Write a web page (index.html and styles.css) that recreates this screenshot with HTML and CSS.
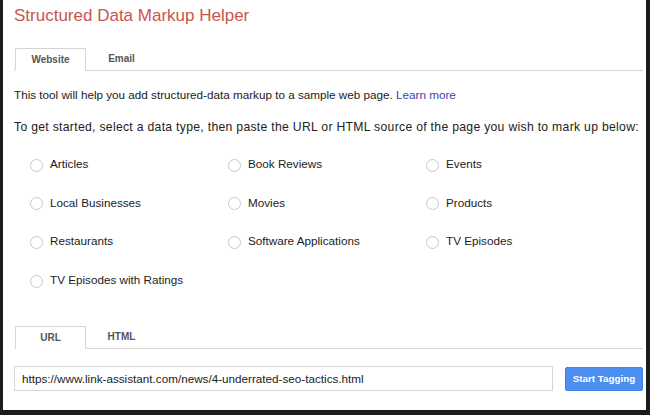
FILE: index.html
```html
<!DOCTYPE html>
<html>
<head>
<meta charset="utf-8">
<link rel="stylesheet" href="styles.css">
</head>
<body>
<div class="frame">
  <h1 class="title">Structured Data Markup Helper</h1>
  <div class="tabs tabs-top">
    <div class="tab active">Website</div>
    <div class="tab">Email</div>
  </div>
  <p class="intro">This tool will help you add structured-data markup to a sample web page. <a class="link" href="#">Learn more</a></p>
  <p class="intro intro2">To get started, select a data type, then paste the URL or HTML source of the page you wish to mark up below:</p>
  <div class="types">
    <label class="opt"><span class="radio"></span>Articles</label>
    <label class="opt"><span class="radio"></span>Book Reviews</label>
    <label class="opt"><span class="radio"></span>Events</label>
    <label class="opt"><span class="radio"></span>Local Businesses</label>
    <label class="opt"><span class="radio"></span>Movies</label>
    <label class="opt"><span class="radio"></span>Products</label>
    <label class="opt"><span class="radio"></span>Restaurants</label>
    <label class="opt"><span class="radio"></span>Software Applications</label>
    <label class="opt"><span class="radio"></span>TV Episodes</label>
    <label class="opt"><span class="radio"></span>TV Episodes with Ratings</label>
  </div>
  <div class="tabs tabs-bottom">
    <div class="tab active">URL</div>
    <div class="tab">HTML</div>
  </div>
  <div class="url-row">
    <div class="url-input">https://www.link-assistant.com/news/4-underrated-seo-tactics.html</div>
    <button class="btn">Start Tagging</button>
  </div>
</div>
</body>
</html>
```
FILE: styles.css
```css
html, body {
  margin: 0;
  padding: 0;
  background: #1c1c1c;
  width: 650px;
  height: 415px;
  overflow: hidden;
}
.frame {
  margin: 0 4px 0 3px;
  height: 410px;
  background: #fff;
  font-family: "Liberation Sans", Arial, sans-serif;
  color: #222;
  padding: 0 3px 0 11px;
  box-sizing: border-box;
}
.title {
  margin: 0;
  padding-top: 6px;
  font-size: 17px;
  font-weight: normal;
  color: #c8564c;
  line-height: 20px;
  height: 42px;
}
.tabs {
  display: flex;
  border-bottom: 1px solid #d6d6d6;
  height: 22px;
  padding-left: 1px;
}
.tab {
  width: 71px;
  box-sizing: border-box;
  text-align: center;
  font-size: 10px;
  font-weight: bold;
  color: #555;
  line-height: 22px;
  height: 23px;
}
.tab.active {
  border: 1px solid #d6d6d6;
  border-bottom: 1px solid #fff;
  background: #fff;
}
.intro {
  margin: 0;
  font-size: 11.7px;
  line-height: 16px;
  padding-top: 16px;
  white-space: nowrap;
}
.intro2 {
  padding-top: 16px;
  font-size: 12.2px;
  letter-spacing: 0.3px;
}
.link {
  color: #4343b0;
  text-decoration: none;
}
.types {
  display: grid;
  grid-template-columns: 198px 198px 1fr;
  row-gap: 22.7px;
  padding: 21px 0 0 16px;
  height: 116px;
}
.opt {
  display: flex;
  align-items: center;
  font-size: 11.7px;
  line-height: 16px;
  color: #222;
}
.radio {
  width: 13px;
  height: 13px;
  border: 1px solid #c8c8c8;
  border-radius: 50%;
  margin-right: 7px;
  margin-top: 2px;
  box-sizing: border-box;
}
.tabs-bottom {
  margin-top: 54px;
}
.url-row {
  display: flex;
  align-items: center;
  margin-top: 17px;
}
.url-input {
  width: 539px;
  flex: none;
  height: 25px;
  box-sizing: border-box;
  border: 1px solid #d6d6d6;
  font-size: 11.7px;
  line-height: 23px;
  padding-left: 7px;
  color: #222;
}
.btn {
  flex: none;
  margin-left: 12px;
  width: 78px;
  height: 24px;
  background: #4d8ff0;
  border: 1px solid #3f83e8;
  border-radius: 2px;
  color: #fff;
  font-family: "Liberation Sans", Arial, sans-serif;
  font-weight: bold;
  font-size: 9.8px;
  padding: 0;
}
```
